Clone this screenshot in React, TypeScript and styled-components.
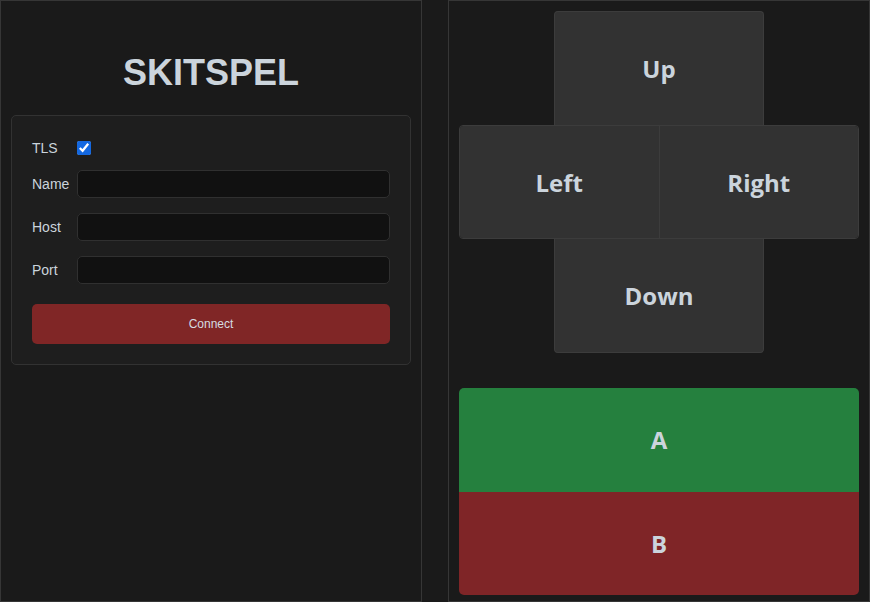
import React from "react";
import styled, { createGlobalStyle } from "styled-components";

const Global = createGlobalStyle`
  html, body { margin: 0; padding: 0; background: #1a1a1a; }
  * { box-sizing: border-box; }
  body { font-family: "Liberation Sans", Arial, sans-serif; color: #cbd4dc; }
`;

const Page = styled.div`
  display: grid;
  grid-template-columns: 1fr 1fr;
  column-gap: 26px;
  width: 870px;
  height: 602px;
`;

const Panel = styled.section`
  background: #1a1a1a;
  border: 1px solid #363636;
  height: 602px;
  padding: 10px;
  display: flex;
  flex-direction: column;
`;

const Title = styled.h1`
  margin: 41px 0 22px;
  text-align: center;
  font-family: "Liberation Sans", Arial, sans-serif;
  font-weight: 700;
  font-size: 36px;
  line-height: 41px;
  color: #cbd4dc;
`;

const Card = styled.div`
  background: #1e1e1e;
  border: 1px solid #323232;
  border-radius: 5px;
  padding: 25px 20px 20px;
  display: flex;
  flex-direction: column;
  gap: 15px;
`;

const FieldRow = styled.label`
  display: flex;
  align-items: center;
  gap: 8px;
  font-size: 14px;
  line-height: 14px;
  min-height: 14px;
  color: #cbd4dc;
`;

const Label = styled.span`
  width: 37px;
  flex: none;
`;

const Check = styled.input`
  margin: 0;
  width: 14px;
  height: 14px;
  accent-color: #1468e0;
`;

const TextInput = styled.input`
  flex: 1;
  height: 28px;
  background: #111111;
  border: 1px solid #303030;
  border-radius: 5px;
  color: #cbd4dc;
  outline: none;
`;

const ConnectButton = styled.button`
  margin-top: 5px;
  height: 40px;
  border: none;
  border-radius: 5px;
  background: #802626;
  color: #d6dbe0;
  font-family: "Liberation Sans", Arial, sans-serif;
  font-size: 12px;
`;

const PadButton = styled.button`
  background: #323232;
  color: #cbd4dc;
  font-family: "Open Sans", "Noto Sans", sans-serif;
  font-weight: 700;
  font-size: 24px;
  border: 1px solid #3c3c3c;
  display: flex;
  align-items: center;
  justify-content: center;
  padding: 0;
`;

const Vertical = styled(PadButton)<{ $pos: "top" | "bottom" }>`
  align-self: center;
  flex: none;
  width: 210px;
  height: 114px;
  ${(p) =>
    p.$pos === "top"
      ? "border-bottom: none; border-radius: 4px 4px 0 0;"
      : "border-top: none; border-radius: 0 0 4px 4px;"}
`;

const MiddleRow = styled.div`
  display: flex;
  flex: none;
  height: 114px;
  border: 1px solid #3c3c3c;
  border-radius: 4px;
  overflow: hidden;
`;

const Horizontal = styled(PadButton)<{ $divider?: boolean }>`
  flex: 1;
  border: none;
  ${(p) => (p.$divider ? "border-right: 1px solid #3c3c3c;" : "")}
`;

const Pad = styled.div`
  display: flex;
  flex: none;
  flex-direction: column;
`;

const ActionGroup = styled.div`
  margin-top: 35px;
  flex: none;
  height: 207px;
  display: flex;
  flex-direction: column;
  border-radius: 5px;
  overflow: hidden;
`;

const Action = styled.button<{ $color: string }>`
  flex: 1;
  border: none;
  background: ${(p) => p.$color};
  color: #cbd4dc;
  font-family: "Open Sans", "Noto Sans", sans-serif;
  font-weight: 700;
  font-size: 24px;
  padding: 0;
`;

export default function App() {
  return (
    <>
      <Global />
      <Page>
        <Panel>
          <Title>SKITSPEL</Title>
          <Card>
            <FieldRow>
              <Label>TLS</Label>
              <Check type="checkbox" defaultChecked />
            </FieldRow>
            <FieldRow>
              <Label>Name</Label>
              <TextInput />
            </FieldRow>
            <FieldRow>
              <Label>Host</Label>
              <TextInput />
            </FieldRow>
            <FieldRow>
              <Label>Port</Label>
              <TextInput />
            </FieldRow>
            <ConnectButton>Connect</ConnectButton>
          </Card>
        </Panel>
        <Panel>
          <Pad>
            <Vertical $pos="top">Up</Vertical>
            <MiddleRow>
              <Horizontal $divider>Left</Horizontal>
              <Horizontal>Right</Horizontal>
            </MiddleRow>
            <Vertical $pos="bottom">Down</Vertical>
          </Pad>
          <ActionGroup>
            <Action $color="#25803e">A</Action>
            <Action $color="#7f2527">B</Action>
          </ActionGroup>
        </Panel>
      </Page>
    </>
  );
}
